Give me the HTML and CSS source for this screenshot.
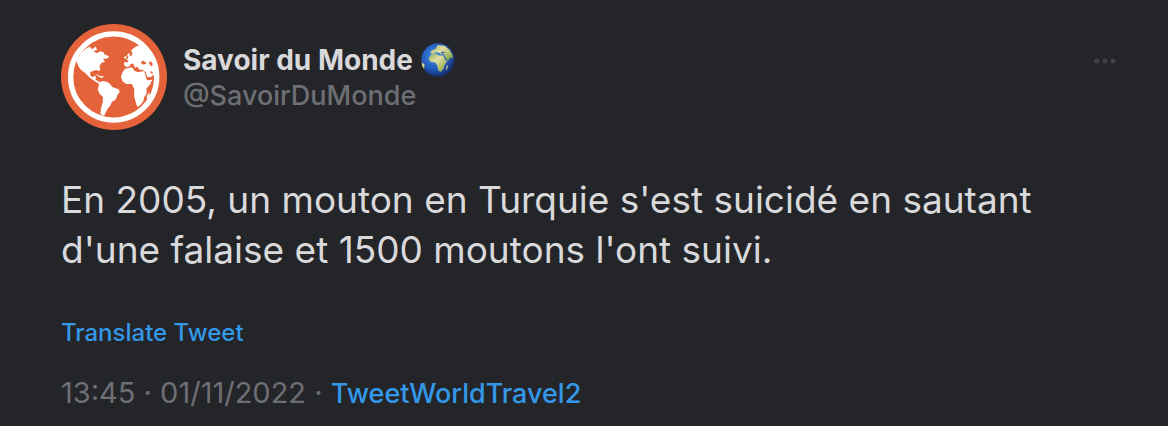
FILE: index.html
```html
<!DOCTYPE html>
<html lang="fr">
<head>
<meta charset="utf-8">
<meta name="viewport" content="width=device-width, initial-scale=1">
<title>Savoir du Monde</title>
<link rel="stylesheet" href="styles.css">
</head>
<body>
<article class="tweet">
  <header class="tweet-header">
    <svg class="avatar" viewBox="32 28 320 320" aria-hidden="true">
      <circle cx="192" cy="188" r="160" fill="#e4633a"/>
      <circle cx="191" cy="188" r="130" fill="none" stroke="#fff" stroke-width="16"/>
      <g fill="#fff">
        <path d="M78 140 L92 116 L108 102 L118 97 L126 104 L137 96 L141 107 L129 109 L140 116 L150 110 L160 114 L164 121 L177 127 L170 132 L158 133 L165 141 L155 145 L148 155 L151 166 L145 170 L139 167 L130 169 L120 174 L121 184 L128 189 L133 184 L138 187 L136 195 L143 201 L152 204 L146 208 L132 199 L120 191 L109 180 L104 175 L92 166 L85 156Z"/>
        <path d="M145 117 L151 113 L160 113 L162 119 L172 123 L177 128 L168 132 L154 130 L157 123Z"/>
        <path d="M134 180 L143 181 L151 186 L159 185 L161 189 L151 190 L143 184Z"/>
        <path d="M149 203 L160 200 L172 203 L181 210 L187 218 L207 226 L209 233 L202 243 L197 257 L186 263 L181 274 L173 284 L168 293 L162 305 L151 300 L153 282 L158 263 L159 249 L148 238 L143 225 L146 212Z"/>
        <path d="M222 151 L223 143 L232 144 L236 138 L229 136 L241 127 L248 119 L244 107 L258 96 L270 93 L284 97 L304 118 L317 143 L322 168 L318 190 L310 182 L304 192 L292 195 L281 175 L280 165 L270 167 L262 156 L256 161 L250 148 L243 148 L238 156 L229 158Z"/>
        <path d="M231 122 L238 115 L240 123 L246 130 L233 134 L236 127Z"/>
        <path d="M223 126 L231 125 L229 132 L223 132Z"/>
        <path d="M226 163 L242 159 L250 161 L252 168 L263 173 L280 171 L286 183 L292 198 L307 196 L302 209 L290 223 L290 239 L283 249 L281 260 L271 274 L262 278 L257 263 L253 246 L253 225 L246 209 L229 209 L218 201 L213 188 L218 173Z"/>
        <path d="M291 245 L299 233 L299 244 L292 260Z"/>
      </g>
      <g fill="#e4633a">
        <path d="M273 144 L280 138 L286 143 L290 149 L278 150Z"/>
        <path d="M297 143 L303 141 L309 147 L307 156 L301 152Z"/>
        <path d="M283 169 L287 172 L293 189 L305 187 L310 181 L307 193 L292 198Z"/>
        <path d="M302 170 L309 173 L308 179 L302 175Z"/>
        <path d="M240 151 L248 153 L258 163 L270 167 L270 172 L254 168 L250 160Z"/>
      </g>
    </svg>
    <div class="identity">
      <div class="name">
        <span>Savoir du Monde</span>
        <svg class="globe" viewBox="0 0 100 100" role="img" aria-label="Globe">
          <defs>
            <radialGradient id="ocean" cx="40%" cy="38%" r="62%">
              <stop offset="0" stop-color="#3f8fe8"/>
              <stop offset="0.65" stop-color="#2258bb"/>
              <stop offset="1" stop-color="#182f6e"/>
            </radialGradient>
            <linearGradient id="land" x2="1" y2="1">
              <stop offset="0" stop-color="#8bb35b"/>
              <stop offset="0.4" stop-color="#e4dda0"/>
              <stop offset="1" stop-color="#739c36"/>
            </linearGradient>
          </defs>
          <circle cx="50" cy="50" r="49" fill="url(#ocean)"/>
          <g fill="url(#land)">
            <path d="M30 34 L44 31 L52 37 L66 37 L71 50 L78 52 L70 63 L67 74 L58 85 L51 81 L48 66 L42 57 L27 55 L22 45Z"/>
            <path d="M27 30 L31 22 L43 17 L49 6 L69 8 L84 20 L93 36 L93 46 L86 43 L80 52 L72 45 L68 34 L58 33 L50 27 L41 28 L36 32Z"/>
            <path d="M2 56 L11 64 L9 77 L3 67Z"/>
            <path d="M76 68 L80 64 L77 77 L73 79Z"/>
          </g>
          <path d="M57 28 L66 25 L70 30 L61 31Z M69 35 L75 49 L72 48Z" fill="#2866b9"/>
        </svg>
      </div>
      <div class="handle">@SavoirDuMonde</div>
    </div>
    <button class="more" type="button" aria-label="Plus">
      <svg viewBox="0 0 22 6" aria-hidden="true"><circle cx="3" cy="3" r="2.5"/><circle cx="11" cy="3" r="2.5"/><circle cx="19" cy="3" r="2.5"/></svg>
    </button>
  </header>
  <p class="tweet-text">En 2005, un mouton en Turquie s'est suicidé en sautant d'une falaise et 1500 moutons l'ont suivi.</p>
  <a class="translate" href="#">Translate Tweet</a>
  <footer class="meta"><time datetime="2022-11-01T13:45">13:45 · 01/11/2022</time> · <a class="source" href="#">TweetWorldTravel2</a></footer>
</article>
</body>
</html>
```
FILE: styles.css
```css
body {
  margin: 0;
  background: #242529;
  color: #d9d9db;
  font-family: Inter, "Liberation Sans", sans-serif;
}

.tweet {
  display: flex;
  flex-direction: column;
  align-items: flex-start;
  padding: 24px 52px 14px 61px;
}

.tweet-header {
  display: flex;
  align-self: stretch;
  gap: 16px;
}

.avatar {
  flex: none;
  width: 106px;
  height: 106px;
}

.identity {
  flex: 1;
  padding-top: 18px;
  font-size: 28px;
  line-height: 36px;
}

.name {
  display: flex;
  align-items: center;
  gap: 8px;
  font-weight: 700;
}

.globe {
  width: 34px;
  height: 34px;
}

.handle {
  color: #6e6f74;
  font-size: 27px;
  font-weight: 500;
}

.more {
  align-self: flex-start;
  display: flex;
  margin-top: 26px;
  padding: 8px 0;
  border: 0;
  background: none;
  cursor: pointer;
}

.more svg {
  width: 22px;
  height: 6px;
  fill: #43444a;
}

.tweet-text {
  margin: 45px 0 0;
  font-size: 37px;
  line-height: 50px;
}

.translate,
.source {
  color: #3498e8;
  font-weight: 500;
  text-decoration: none;
}

.translate {
  margin-top: 42px;
  font-size: 24px;
  line-height: 32px;
}

.meta {
  margin-top: 26px;
  color: #6e6f74;
  font-size: 29px;
  line-height: 36px;
}

.source {
  font-size: 27px;
}
```
